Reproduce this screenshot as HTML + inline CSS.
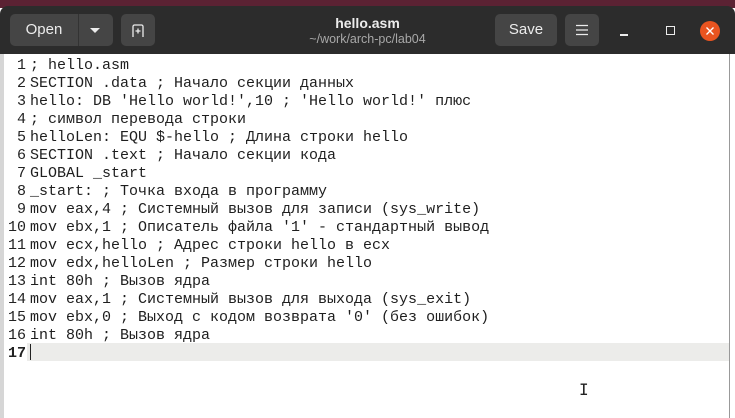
<!DOCTYPE html>
<html><head><meta charset="utf-8"><style>
*{margin:0;padding:0;box-sizing:border-box}
body{width:735px;height:418px;overflow:hidden;background:#fff;font-family:"Liberation Sans","DejaVu Sans",sans-serif;position:relative}
.top{position:absolute;left:0;top:0;width:735px;height:8px;background:#5b2233}
.hdr{position:absolute;left:0;top:6px;width:735px;height:48px;background:#2c2c2c;border-radius:8px 8px 0 0}
.btn{position:absolute;background:#454545;border-radius:5px;color:#ececec;font-size:15px;text-align:center;line-height:32px}
.title{position:absolute;left:0;width:735px;text-align:center;color:#ececec}
.gut{position:absolute;left:0;top:54px;width:4px;height:364px;background:#d6d6d6}
.code{position:absolute;left:0;top:57px;font-family:"Liberation Mono","DejaVu Sans Mono",monospace;font-size:15px;line-height:18px;color:#1e1e1e;white-space:pre}
.ln{display:inline-block;width:30px;text-align:right;padding-right:4px;color:#222}
.cur{position:absolute;left:27px;top:343px;width:702px;height:18px;background:#ececea}
.rb{position:absolute;left:729px;top:54px;width:6px;height:364px;background:#fff;border-left:1px solid #999}
</style></head><body>
<div class="top"></div>
<div class="hdr"></div>
<div class="btn" style="left:10px;top:14px;width:103px;height:32px"><span style="position:absolute;left:0;width:68px">Open</span><span style="position:absolute;left:68px;top:0;width:1px;height:32px;background:#333"></span><span style="position:absolute;left:80px;top:14px;width:0;height:0;border-left:5px solid transparent;border-right:5px solid transparent;border-top:5px solid #ececec"></span></div>
<div class="btn" style="left:121px;top:14px;width:34px;height:32px"><svg width="34" height="32" viewBox="0 0 34 32" style="position:absolute;left:0;top:0"><path d="M12 23V12.5A1.5 1.5 0 0 1 13.5 11H20.5A1.5 1.5 0 0 1 22 12.5V23" fill="none" stroke="#ececec" stroke-width="1.3"/><path d="M17 14.5v5M14.5 17h5" stroke="#ececec" stroke-width="1.3"/></svg></div>
<div class="title" style="top:15px;font-size:14px;font-weight:bold">hello.asm</div>
<div class="title" style="top:32px;font-size:12.5px;color:#a8a8a8">~/work/arch-pc/lab04</div>
<div class="btn" style="left:495px;top:14px;width:62px;height:32px">Save</div>
<div class="btn" style="left:565px;top:14px;width:34px;height:32px"><svg width="34" height="32" style="position:absolute;left:0;top:0"><path d="M11 11.5h12M11 16h12M11 20.5h12" stroke="#ececec" stroke-width="1.3"/></svg></div>
<div style="position:absolute;left:620px;top:34px;width:8px;height:1.5px;background:#ececec"></div>
<div style="position:absolute;left:666px;top:26px;width:9px;height:9px;border:1.3px solid #ececec"></div>
<div style="position:absolute;left:700px;top:21px;width:20px;height:20px;border-radius:50%;background:#e95420"><svg width="20" height="20" style="position:absolute;left:0;top:0"><path d="M6.5 6.5l7 7M13.5 6.5l-7 7" stroke="#fff" stroke-width="1.4"/></svg></div>
<div class="gut"></div>
<div class="cur"></div>
<div style="position:absolute;left:30px;top:344px;width:1px;height:16px;background:#222"></div>
<div class="rb"></div>
<div class="code"><span class="ln">1</span>; hello.asm
<span class="ln">2</span>SECTION .data ; Начало секции данных
<span class="ln">3</span>hello: DB 'Hello world!',10 ; 'Hello world!' плюс
<span class="ln">4</span>; символ перевода строки
<span class="ln">5</span>helloLen: EQU $-hello ; Длина строки hello
<span class="ln">6</span>SECTION .text ; Начало секции кода
<span class="ln">7</span>GLOBAL _start
<span class="ln">8</span>_start: ; Точка входа в программу
<span class="ln">9</span>mov eax,4 ; Системный вызов для записи (sys_write)
<span class="ln">10</span>mov ebx,1 ; Описатель файла '1' - стандартный вывод
<span class="ln">11</span>mov ecx,hello ; Адрес строки hello в ecx
<span class="ln">12</span>mov edx,helloLen ; Размер строки hello
<span class="ln">13</span>int 80h ; Вызов ядра
<span class="ln">14</span>mov eax,1 ; Системный вызов для выхода (sys_exit)
<span class="ln">15</span>mov ebx,0 ; Выход с кодом возврата '0' (без ошибок)
<span class="ln">16</span>int 80h ; Вызов ядра
<span class="ln" style="font-weight:bold">17</span></div>
<div style="position:absolute;left:579px;top:380px;font-family:'DejaVu Sans Mono',monospace;font-size:16px;color:#222">I</div>
</body></html>
